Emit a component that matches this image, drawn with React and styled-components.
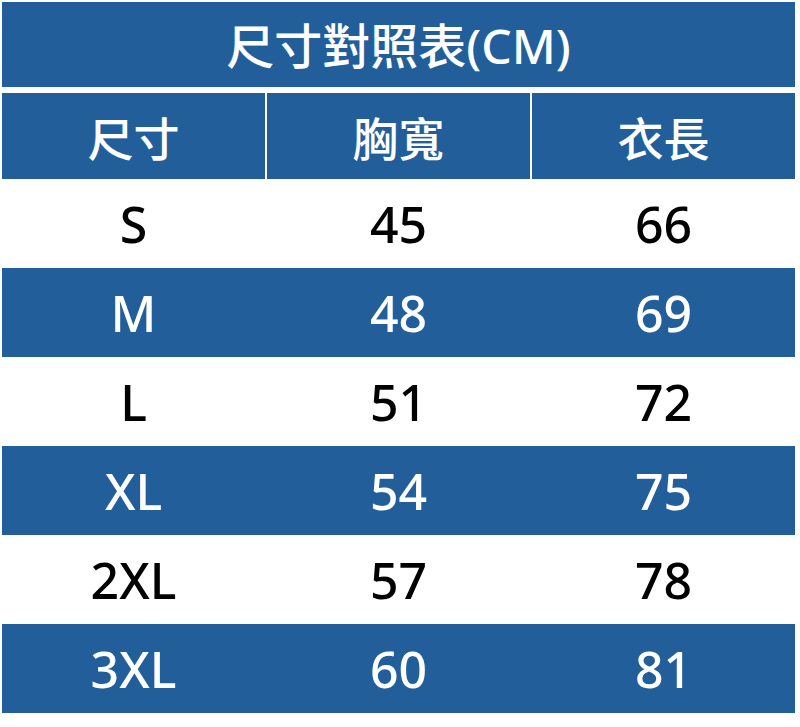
import styled, { createGlobalStyle } from "styled-components";

const GlobalStyle = createGlobalStyle`
  body {
    margin: 0;
    background: #fff;
    font-family: "Noto Sans", "Noto Sans CJK TC", sans-serif;
  }
`

const BLUE = "#225f9a";

const Table = styled.div`
  width: 793px;
  padding: 2px 0 0 2px;
  display: flex;
  flex-direction: column;
`
const Title = styled.div`
  height: 85px;
  background: ${BLUE};
  color: #fff;
  display: flex;
  align-items: center;
  justify-content: center;
  font-size: 48px;
  font-weight: 500;
  padding-bottom: 3px;
  box-sizing: border-box;
  margin-bottom: 6px;
`
const Row = styled.div`
  display: grid;
  grid-template-columns: 263px 263px 263px;
  column-gap: 2px;
  height: ${(props) => (props.header ? "86px" : "89px")};
  background: ${(props) => (props.blue && !props.header ? BLUE : "#fff")};
`
const Cell = styled.div`
  display: flex;
  align-items: center;
  justify-content: center;
  background: ${(props) => (props.blue ? BLUE : "#fff")};
  color: ${(props) => (props.blue ? "#fff" : "#000")};
  font-size: ${(props) => (props.cjk ? "46px" : "50px")};
  font-weight: 500;
`

const rows = [
  ["S", "45", "66"],
  ["M", "48", "69"],
  ["L", "51", "72"],
  ["XL", "54", "75"],
  ["2XL", "57", "78"],
  ["3XL", "60", "81"],
];

const App = () => {
  return (
    <>
      <GlobalStyle />
      <Table>
        <Title>尺寸對照表(CM)</Title>
        <Row header>
          <Cell blue cjk>尺寸</Cell>
          <Cell blue cjk>胸寬</Cell>
          <Cell blue cjk>衣長</Cell>
        </Row>
        {rows.map((r, i) => {
          const blue = i % 2 === 1;
          return (
            <Row key={r[0]} blue={blue}>
              {r.map((v, j) => (
                <Cell key={j} blue={blue}>{v}</Cell>
              ))}
            </Row>
          );
        })}
      </Table>
    </>
  );
};

export default App;
